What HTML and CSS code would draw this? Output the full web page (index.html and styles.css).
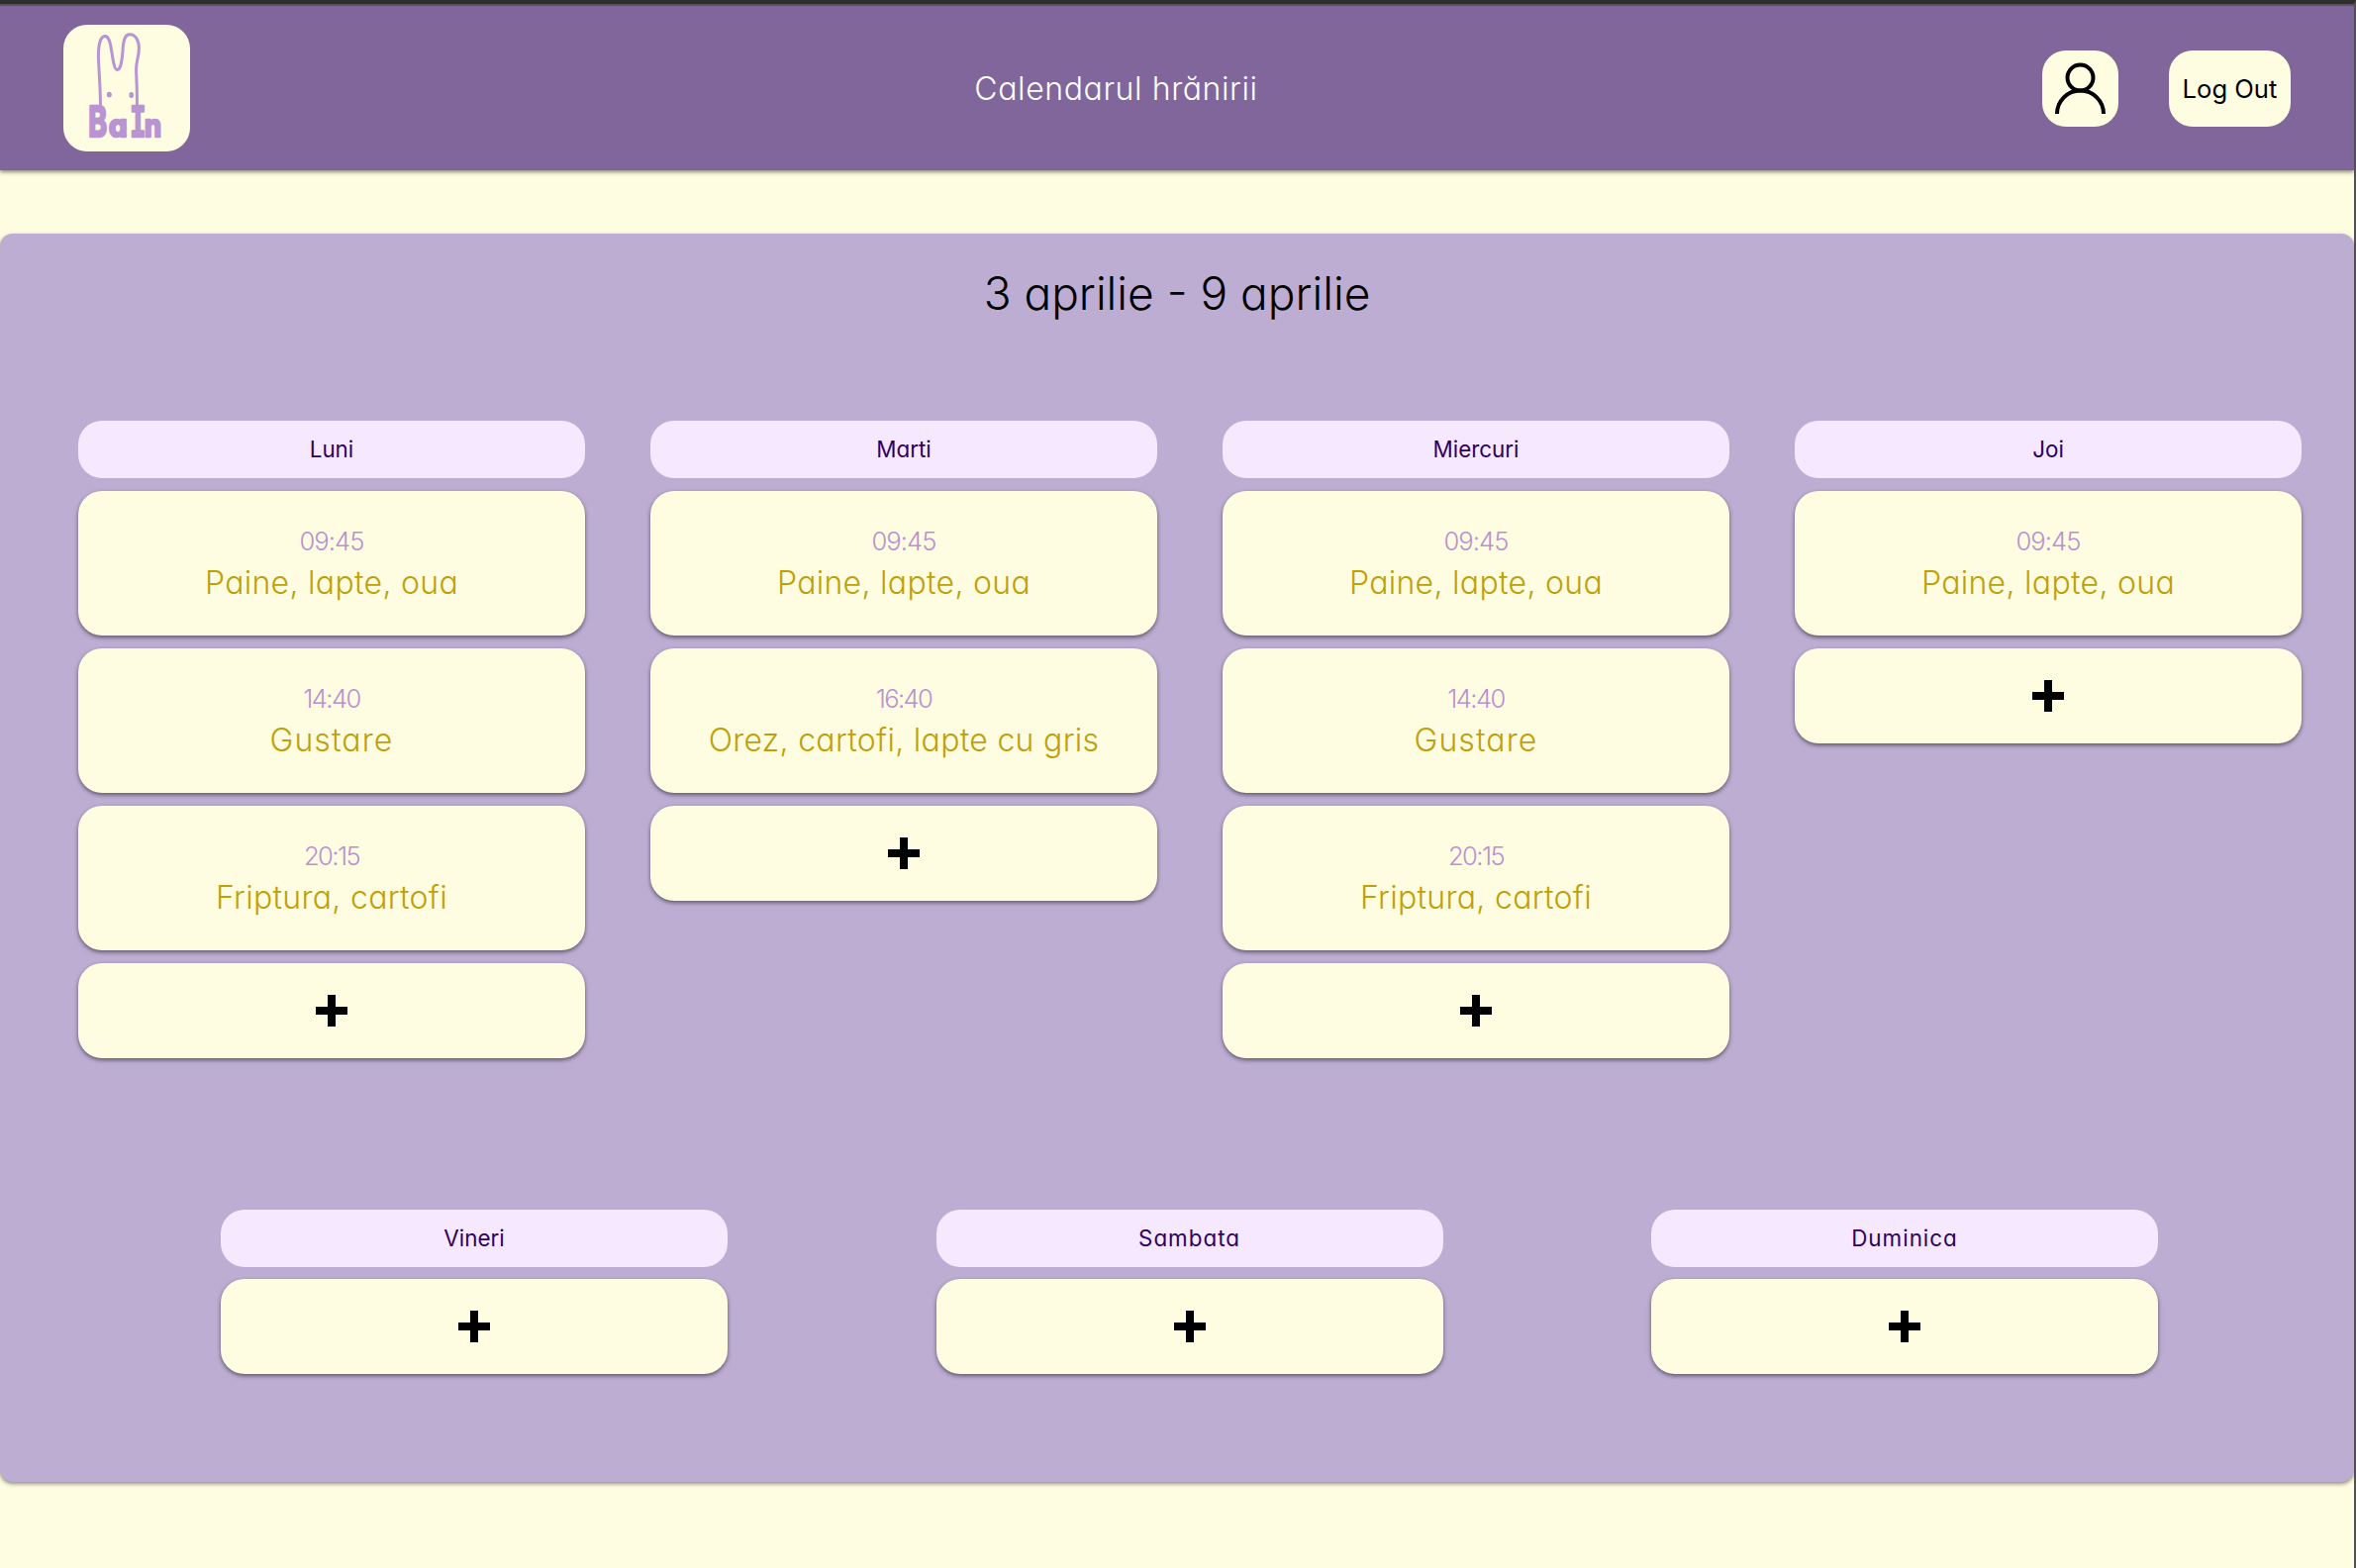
FILE: index.html
```html
<!DOCTYPE html>
<html lang="ro">
<head>
<meta charset="utf-8">
<title>Calendarul hrănirii</title>
<link rel="stylesheet" href="styles.css">
</head>
<body>
<svg width="0" height="0" class="defs"><symbol id="plus" viewBox="0 0 32 32"><path d="M12 0h8v12h12v8H20v12h-8V20H0v-8h12z"/></symbol></svg>
<header class="topbar">
  <svg class="logo" viewBox="0 0 128 128">
    <path class="logo-line" d="M37.5 84C37.5 60 35.6 45 35.4 31C35.4 19 38 12 42 11.6C46 11.4 47.4 18 48.8 27C50.2 36 51.5 45.5 54.3 45.5C58.5 45.5 59 36 60 27C60.4 16 62 9.8 67.2 9.8C73 9.8 76.4 16 76.4 24C76.4 32 73.6 36 73.6 45C73.6 54 74.6 58 74.4 84"/>
    <ellipse class="logo-dot" cx="46.3" cy="70.6" rx="2.5" ry="2.9"/>
    <ellipse class="logo-dot" cx="68.7" cy="71" rx="2.4" ry="2.9"/>
    <g class="logo-word">
      <text transform="translate(25.2 112.6) scale(.68 1)" font-size="42">B</text>
      <text transform="translate(46 112.6) scale(.95 1)" font-size="31">a</text>
      <text class="slab" transform="translate(67.3 112.6) scale(.64 1)" font-size="42">I</text>
      <text transform="translate(82 112.6) scale(.88 1)" font-size="31">n</text>
    </g>
  </svg>
  <h1 class="title">Calendarul hrănirii</h1>
  <div class="actions">
    <a class="button user"><svg viewBox="0 0 77 77"><circle cx="38.5" cy="27.5" r="13"/><path d="M15 64a23.5 23.5 0 0 1 47 0"/></svg></a>
    <a class="button logout">Log Out</a>
  </div>
</header>
<main class="panel">
  <h2 class="range">3 aprilie - 9 aprilie</h2>
  <div class="week">
    <section class="day"><h3>Luni</h3>
      <article class="meal"><time>09:45</time><p>Paine, lapte, oua</p></article>
      <article class="meal"><time class="tight">14:40</time><p class="loose">Gustare</p></article>
      <article class="meal"><time class="tight">20:15</time><p>Friptura, cartofi</p></article>
      <a class="add"><svg><use href="#plus"/></svg></a></section>
    <section class="day"><h3>Marti</h3>
      <article class="meal"><time>09:45</time><p>Paine, lapte, oua</p></article>
      <article class="meal"><time class="tight">16:40</time><p>Orez, cartofi, lapte cu gris</p></article>
      <a class="add"><svg><use href="#plus"/></svg></a></section>
    <section class="day"><h3>Miercuri</h3>
      <article class="meal"><time>09:45</time><p>Paine, lapte, oua</p></article>
      <article class="meal"><time class="tight">14:40</time><p class="loose">Gustare</p></article>
      <article class="meal"><time class="tight">20:15</time><p>Friptura, cartofi</p></article>
      <a class="add"><svg><use href="#plus"/></svg></a></section>
    <section class="day"><h3>Joi</h3>
      <article class="meal"><time>09:45</time><p>Paine, lapte, oua</p></article>
      <a class="add"><svg><use href="#plus"/></svg></a></section>
  </div>
  <div class="week weekend">
    <section class="day"><h3>Vineri</h3><a class="add"><svg><use href="#plus"/></svg></a></section>
    <section class="day"><h3 class="loose">Sambata</h3><a class="add"><svg><use href="#plus"/></svg></a></section>
    <section class="day"><h3 class="loose">Duminica</h3><a class="add"><svg><use href="#plus"/></svg></a></section>
  </div>
</main>
</body>
</html>
```
FILE: styles.css
```css
* { box-sizing: border-box; margin: 0; }
body {
  min-height: 1584px;
  background: #fffde1;
  border-top: 4px solid #2d2d2d;
  border-right: 2px solid #505055;
  font-family: Inter, "Liberation Sans", sans-serif;
  font-feature-settings: "cv11";
  font-weight: 300;
  color: #000;
}
h1, h2, h3 { font-weight: inherit; }
.defs { position: absolute; }
.topbar {
  height: 168px;
  padding: 0 64px;
  border-top: 2px solid #555;
  display: flex;
  align-items: center;
  justify-content: space-between;
  background: #80669b;
  box-shadow: 0 2px 4px rgba(0, 0, 0, .45);
}
.logo { width: 128px; height: 128px; border-radius: 24px; background: #fffde1; }
.logo-line { fill: none; stroke: #b994d2; stroke-width: 3; }
.logo-dot { fill: #b994d2; }
.logo-word {
  font-weight: 700;
  fill: #b994d2;
  stroke: #b994d2;
  stroke-width: 2.6;
  stroke-linejoin: round;
}
.logo-word .slab { font-family: "DejaVu Sans Mono", monospace; }
.title { padding-top: 2px; font-size: 32px; line-height: 48px; letter-spacing: .6px; color: #fff; }
.actions { display: flex; gap: 51px; }
.button {
  height: 77px;
  display: flex;
  align-items: center;
  justify-content: center;
  border-radius: 24px;
  background: #fffde1;
}
.user { width: 77px; }
.user svg { width: 77px; height: 77px; fill: none; stroke: #000; stroke-width: 4; }
.logout { width: 123px; font-size: 25.6px; font-weight: 370; }
.panel {
  height: 1261px;
  margin-top: 64px;
  padding-top: 25px;
  border-radius: 13px;
  background: #bdadd3;
  box-shadow: 0 2px 4px rgba(0, 0, 0, .45);
}
.range { font-size: 46px; line-height: 70px; text-align: center; }
.week {
  height: 644px;
  margin-top: 94px;
  padding-left: 79px;
  display: flex;
  align-items: flex-start;
  gap: 66px;
}
.weekend { height: auto; margin-top: 153px; padding-left: 223px; gap: 210.5px; }
.day { width: 512px; flex: none; display: flex; flex-direction: column; gap: 13px; }
.weekend .day { gap: 12px; }
.day h3 {
  height: 58px;
  line-height: 58px;
  border-radius: 24px;
  background: #f5e8ff;
  color: #2f0060;
  font-size: 22.4px;
  font-weight: 370;
  text-align: center;
}
.day h3.loose { letter-spacing: 1px; }
.meal, .add {
  border-radius: 24px;
  background: #fffde1;
  box-shadow: 0 2px 4px rgba(0, 0, 0, .5);
}
.meal { height: 146px; padding-top: 32px; text-align: center; }
.meal time { display: block; font-size: 25.6px; line-height: 38px; letter-spacing: -.9px; color: #ba90d2; }
.meal time.tight { letter-spacing: -1.6px; }
.meal p { font-size: 32px; line-height: 46px; letter-spacing: .3px; color: #c0a008; }
.meal p.loose { letter-spacing: 1.1px; }
.add { height: 96px; display: flex; align-items: center; justify-content: center; }
.add svg { width: 32px; height: 32px; }
```
